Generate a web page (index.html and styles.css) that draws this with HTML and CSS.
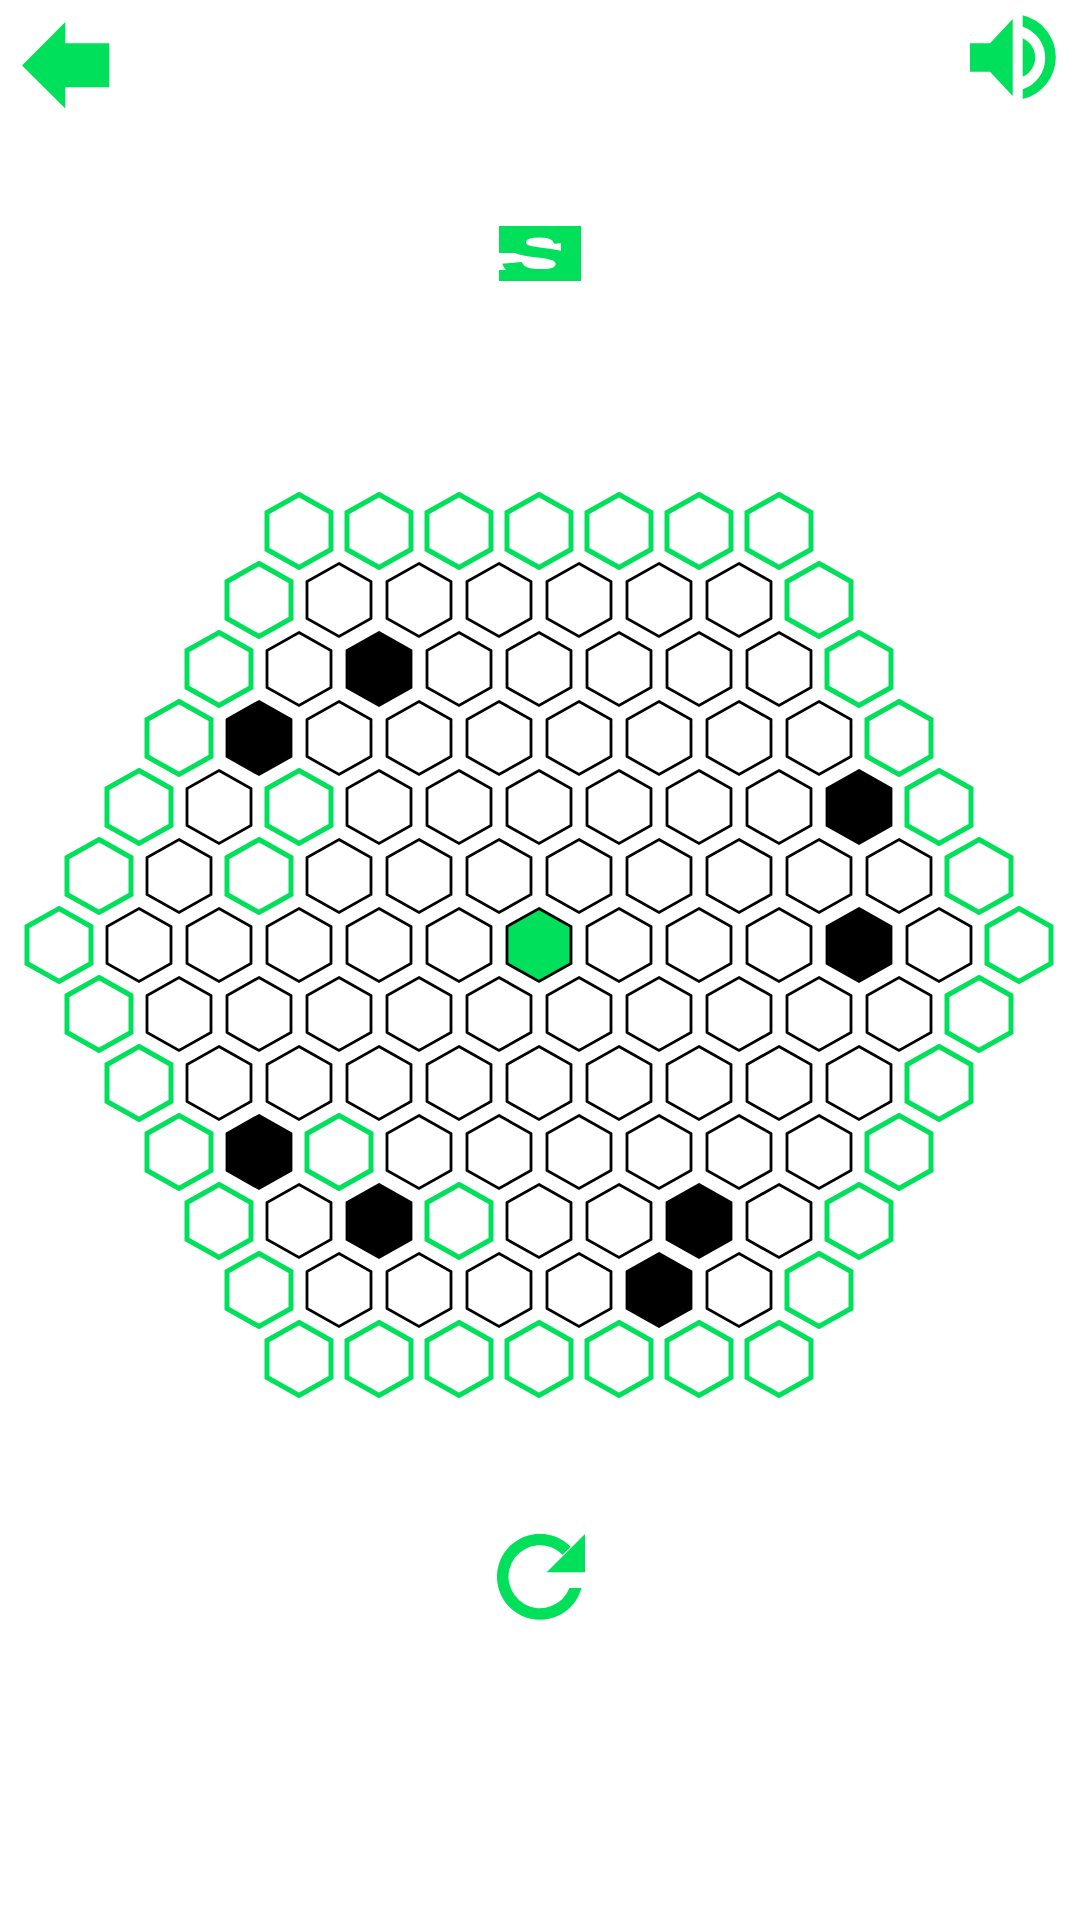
FILE: index.html
```html
<!DOCTYPE html>
<html lang="en">
<head>
    <meta charset="UTF-8">
    <title>Hex</title>
    <link rel="stylesheet" href="styles.css">
</head>
<body>
<div id="game">
    <div id="top">
        <svg class="icon-back" viewBox="0 0 88 87">
            <path d="M0 43.500 L43.300 0 V21.300 H87.300 V65.300 H43.300 V86.500 Z"/>
        </svg>
        <svg class="icon-sound" viewBox="0 0 87 84">
            <path d="M0 28.300 H20 L42.700 4 V81 L20 56.700 H0 Z"/>
            <path d="M52.700 23.300 A21 21 0 0 1 52.700 61.700 Z"/>
            <path d="M52.700 0.300 A43 43 0 0 1 52.700 84 V74.300 A33 33 0 0 0 52.700 11.700 Z"/>
        </svg>
    </div>
    <div id="level"><div class="level-box"><span>S</span></div></div>
    <div id="board"></div>
    <div id="bottom">
        <svg class="icon-reload" viewBox="0 0 88 87">
            <path d="M73.700 12.700 A43 43 0 1 0 84.500 54 H72.400 A31.500 31.500 0 1 1 65.500 20.700 Z"/>
            <path d="M88 0 V38.300 H49.700 Z"/>
        </svg>
    </div>
</div>
<script src="board.js"></script>
</body>
</html>
```

FILE: styles.css
```css
*{
    margin: 0;
    padding: 0;
    box-sizing: border-box;
}
body{
    background-color: #fff;
    font-family: "Liberation Sans", sans-serif;
}
#game{
    width: 1079px;
    height: 1919px;
    overflow: hidden;
}
#top{
    display: flex;
    justify-content: space-between;
    align-items: flex-start;
    padding: 15px 22px 0;
    height: 226px;
}
#top svg, #bottom svg{
    fill: #00e05a;
    display: block;
}
.icon-back{
    width: 88px;
    height: 87px;
    margin-top: 7px;
}
.icon-sound{
    width: 87px;
    height: 84px;
}
#level{
    height: 270.5px;
    display: flex;
    justify-content: center;
    align-items: flex-start;
}
/* square off the letter so it fills the block */
.level-box{
    width: 82px;
    height: 55px;
    display: flex;
    justify-content: center;
    background:
        linear-gradient(#00e05a, #00e05a) left top / 100% 11px no-repeat,
        linear-gradient(#00e05a, #00e05a) left bottom / 100% 11px no-repeat,
        linear-gradient(#00e05a, #00e05a) right top / 20px 100% no-repeat,
        linear-gradient(#00e05a, #00e05a) left top / 20px 27px no-repeat;
}
.level-box span{
    display: block;
    height: 55px;
    line-height: 55px;
    font-size: 68px;
    font-weight: 700;
    color: #00e05a;
    -webkit-text-stroke: 2px #00e05a;
    transform: scaleX(1.7);
}
#board{
    display: flex;
    flex-direction: column;
    align-items: center;
}
.row{
    display: flex;
    height: 69px;
}
.cell{
    width: 80px;
    height: 69px;
    position: relative;
    left: -1px;
}
.cell svg{
    display: block;
    width: 80px;
    height: 80px;
    margin-top: -5.5px;
    fill: none;
    stroke: #000;
    stroke-width: 2.8;
    stroke-linejoin: miter;
}
.edge svg{
    stroke: #00e05a;
    stroke-width: 5;
}
.wall svg{
    fill: #000;
}
.goal svg{
    fill: #00e05a;
}
#bottom{
    display: flex;
    justify-content: center;
    padding-top: 140.5px;
}
.icon-reload{
    width: 88px;
    height: 87px;
    margin-left: 3px;
}
```

FILE: board.js
```js
// rows of the board, top to bottom
var oBoard = document.getElementById("board");
var aCounts = [7, 8, 9, 10, 11, 12, 13, 12, 11, 10, 9, 8, 7];
var oWalls = {"2-2": 1, "3-1": 1, "4-9": 1, "6-10": 1, "9-1": 1, "10-2": 1, "10-6": 1, "11-5": 1};
var oMarked = {"4-2": 1, "5-2": 1, "9-2": 1, "10-3": 1};
var sHex = '<svg viewBox="-40 -40 80 80"><path d="M0 -36.500 L32 -18.500 V18.500 L0 36.500 L-32 18.500 V-18.500 Z"/></svg>';

for (var i = 0; i < aCounts.length; i++) {
    var oRow = document.createElement("div");
    oRow.className = "row";
    for (var j = 0; j < aCounts[i]; j++) {
        var oCell = document.createElement("div");
        var sKey = i + "-" + j;
        oCell.className = "cell";
        if (i == 0 || i == aCounts.length - 1 || j == 0 || j == aCounts[i] - 1 || oMarked[sKey]) {
            oCell.className += " edge";
        }
        if (oWalls[sKey]) {
            oCell.className += " wall";
        }
        if (sKey == "6-6") {
            oCell.className += " goal";
        }
        oCell.innerHTML = sHex;
        oRow.appendChild(oCell);
    }
    oBoard.appendChild(oRow);
}
```
